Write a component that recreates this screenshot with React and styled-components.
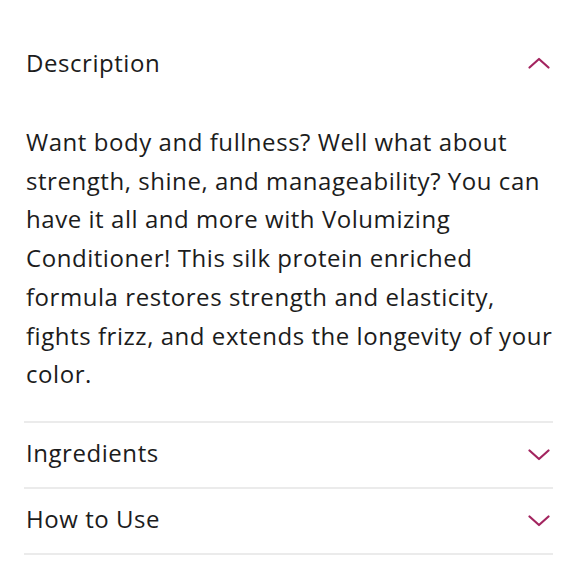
import React from 'react';
import styled, { createGlobalStyle } from 'styled-components';

const GlobalStyle = createGlobalStyle`
  body {
    margin: 0;
    background: #ffffff;
    font-family: "Open Sans", "Noto Sans", sans-serif;
    color: #1c1c1c;
  }
`;

const Accordion = styled.div`
  width: 580px;
  padding: 30px 27px 0 24px;
  box-sizing: border-box;
`;

const Section = styled.div`
  border-top: ${({ $first }) => ($first ? 'none' : '2px solid #ebebeb')};
  &:last-child {
    border-bottom: 2px solid #ebebeb;
  }
`;

const Header = styled.div`
  height: ${({ $first }) => ($first ? '66px' : '64px')};
  display: flex;
  align-items: center;
  justify-content: space-between;
  padding-left: 2px;
`;

const Title = styled.span`
  font-size: 24px;
  font-weight: 400;
  letter-spacing: 0.55px;
  padding-bottom: ${({ $first }) => ($first ? '2px' : '5px')};
`;

const Body = styled.p`
  margin: 27px 0 27px 2px;
  font-size: 24px;
  line-height: 38.7px;
  letter-spacing: 0.55px;
`;

const Chevron = ({ up }) => (
  <svg width="22" height="12" viewBox="0 0 22 12" style={{ marginRight: 3 }}>
    <polyline
      points={up ? '1.5,10.5 11,2 20.5,10.5' : '1.5,1.5 11,10 20.5,1.5'}
      fill="none"
      stroke="#a3245f"
      strokeWidth="2.2"
      strokeLinecap="round"
      strokeLinejoin="round"
    />
  </svg>
);

const items = [
  {
    title: 'Description',
    open: true,
    text: 'Want body and fullness? Well what about strength, shine, and manageability? You can have it all and more with Volumizing Conditioner! This silk protein enriched formula restores strength and elasticity, fights frizz, and extends the longevity of your color.',
  },
  { title: 'Ingredients', open: false },
  { title: 'How to Use', open: false },
];

const App = () => {
  return (
    <>
      <GlobalStyle />
      <Accordion>
        {items.map((item, i) => (
          <Section key={item.title} $first={i === 0}>
            <Header $first={i === 0}>
              <Title $first={i === 0}>{item.title}</Title>
              <Chevron up={item.open} />
            </Header>
            {item.open && <Body>{item.text}</Body>}
          </Section>
        ))}
      </Accordion>
    </>
  );
};

export default App;
